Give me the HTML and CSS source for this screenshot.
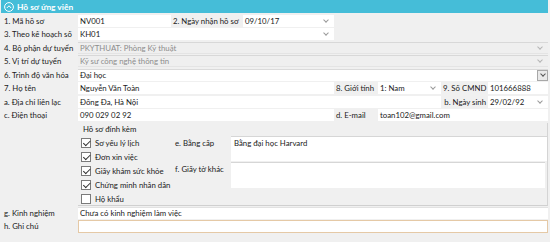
FILE: index.html
```html
<!DOCTYPE html>
<html lang="vi">
<head>
<meta charset="utf-8">
<link rel="stylesheet" href="styles.css">
</head>
<body>
<div class="panel">
  <div class="header">
    <svg class="hicon" width="10" height="10" viewBox="0 0 10 10"><circle cx="5" cy="5" r="4.4" fill="none" stroke="#fff" stroke-width="1"/><path d="M2.8 6 L5 3.8 L7.2 6" fill="none" stroke="#fff" stroke-width="1"/></svg>
    <span>Hồ sơ ứng viên</span>
  </div>

  <div class="grid">
    <div class="lbl">1. Mã hồ sơ</div>
    <div class="inp">NV001</div>
    <div class="lbl lbl2">2. Ngày nhận hồ sơ</div>
    <div class="inp combo">09/10/17<span class="chev"></span></div>
    <div class="blank span4"></div>

    <div class="lbl">3. Theo kế hoạch số</div>
    <div class="inp combo span3">KH01<span class="chev"></span></div>
    <div class="blank span4"></div>

    <div class="lbl">4. Bộ phận dự tuyển</div>
    <div class="inp dis combo span7">PKYTHUAT: Phòng Kỹ thuật<span class="chev"></span></div>

    <div class="lbl">5. Vị trí dự tuyển</div>
    <div class="inp dis combo span7">Kỹ sư công nghệ thông tin<span class="chev"></span></div>

    <div class="lbl">6. Trình độ văn hóa</div>
    <div class="inp span7 dd">Đại học<span class="ddbtn"><span class="chev dark"></span></span></div>

    <div class="lbl">7. Họ tên</div>
    <div class="inp span3">Nguyễn Văn Toàn</div>
    <div class="lbl lbl4">8. Giới tính</div>
    <div class="inp combo">1: Nam<span class="chev"></span></div>
    <div class="lbl lbl6">9. Số CMND</div>
    <div class="inp">101666888</div>

    <div class="lbl">a. Địa chỉ liên lạc</div>
    <div class="inp span5">Đống Đa, Hà Nội</div>
    <div class="lbl lbl6 right">b. Ngày sinh</div>
    <div class="inp combo">29/02/92<span class="chev"></span></div>

    <div class="lbl">c. Điện thoại</div>
    <div class="inp span3">090 029 02 92</div>
    <div class="lbl lbl4">d. E-mail</div>
    <div class="inp span3">toan102@gmail.com</div>
  </div>

  <div class="attach">
    <div class="legend">Hồ sơ đính kèm</div>
    <div class="abody">
      <div class="checks">
        <label class="chk"><span class="box on"></span>Sơ yếu lý lịch</label>
        <label class="chk"><span class="box on"></span>Đơn xin việc</label>
        <label class="chk"><span class="box on"></span>Giấy khám sức khỏe</label>
        <label class="chk"><span class="box on"></span>Chứng minh nhân dân</label>
        <label class="chk"><span class="box"></span>Hộ khẩu</label>
      </div>
      <div class="docs">
        <div class="dlbl">e. Bằng cấp</div>
        <div class="area a1">Bằng đại học Harvard</div>
        <div class="dlbl">f. Giấy tờ khác</div>
        <div class="area a2"></div>
      </div>
    </div>
  </div>

  <div class="bottom">
    <div class="lbl">g. Kinh nghiệm</div>
    <div class="inp exp">Chưa có kinh nghiệm làm việc</div>
    <div class="lbl">h. Ghi chú</div>
    <div class="inp note"></div>
  </div>
</div>
</body>
</html>
```

FILE: styles.css
```css
* { box-sizing: border-box; }
html, body { margin: 0; padding: 0; }
body {
  background: #f0f0f0;
  font-family: "Lato", "Liberation Sans", sans-serif;
  font-size: 7.8px;
  color: #1a1a1a;
  width: 550px;
  height: 242px;
  overflow: hidden;
}
.panel { width: 548px; }
.header {
  height: 13px;
  background: #45bdd8;
  color: #fff;
  font-weight: bold;
  font-size: 8.4px;
  display: flex;
  align-items: center;
  gap: 3px;
  padding-left: 3px;
  margin-left: 1px;
}
.hicon { flex: none; }

.grid {
  display: grid;
  grid-template-columns: 78px 93px 72px 91px 44px 63px 47px 60px;
  grid-auto-rows: 13.5px;
  padding-top: 1.5px;
}
.lbl {
  padding-left: 4px;
  line-height: 12px;
  white-space: nowrap;
}
.lbl2, .lbl4, .lbl6 { padding-left: 2px; }
.right { text-align: right; padding-right: 2px; padding-left: 0; }
.inp {
  position: relative;
  background: #fff;
  height: 12px;
  line-height: 12px;
  padding-left: 2px;
  white-space: nowrap;
  overflow: hidden;
}
.span3 { grid-column: span 3; }
.span4 { grid-column: span 4; }
.span5 { grid-column: span 5; }
.span7 { grid-column: span 7; }
.dis {
  background: #efefef;
  border-top: 1px solid #d8d8d8;
  border-bottom: 1px solid #e4e4e4;
  color: #8c8c8c;
  line-height: 10px;
}
.chev {
  position: absolute;
  right: 6px;
  top: 3px;
  width: 4px;
  height: 4px;
  border-right: 1px solid #9a9a9a;
  border-bottom: 1px solid #9a9a9a;
  transform: rotate(45deg);
}
.dis .chev { top: 2px; border-color: #b5b5b5; }
.dd { border-top: 1px solid #dadada; line-height: 11px; }
.ddbtn {
  position: absolute;
  right: 0;
  top: 0;
  width: 11px;
  height: 11px;
  background: #e9e9e9;
  border: 1px solid #a8a8a8;
}
.ddbtn .chev { right: 2.5px; top: 1.5px; border-color: #555; }

.attach {
  margin-left: 78px;
  height: 83px;
  border-right: 1px solid #d4d4d4;
  border-bottom: 1px solid #d0d0d0;
}
.legend {
  height: 12px;
  line-height: 12px;
  padding-left: 5px;
}
.abody { display: flex; }
.checks {
  width: 97px;
  display: flex;
  flex-direction: column;
  padding-top: 1px;
}
.chk {
  height: 14px;
  display: flex;
  align-items: center;
  gap: 4px;
  padding-left: 3px;
  white-space: nowrap;
}
.box {
  width: 10px;
  height: 10px;
  background: #fff;
  border: 1px solid #7a7a7a;
  position: relative;
  flex: none;
}
.box.on::after {
  content: "";
  position: absolute;
  left: 2.5px;
  top: 0.5px;
  width: 3px;
  height: 5.5px;
  border-right: 1px solid #333;
  border-bottom: 1px solid #333;
  transform: rotate(45deg);
}
.docs {
  flex: 1;
  display: grid;
  grid-template-columns: 56px 1fr;
  grid-template-rows: 25px 26px;
  row-gap: 1px;
  padding-top: 1px;
}
.dlbl { padding-top: 1px; line-height: 12px; white-space: nowrap; }
.area {
  background: #fff;
  border-top: 1px solid #d6d6d6;
  padding: 1px 3px;
  line-height: 11px;
}
.a2 { margin-right: 2px; }

.bottom {
  display: grid;
  grid-template-columns: 78px 1fr;
  grid-template-rows: 13.5px 13.5px;
  padding-top: 1px;
}
.exp { border-top: 1px solid #e2e2e2; line-height: 11px; }
.note { height: 13px; border: 1px solid #e5c9a6; }
```
